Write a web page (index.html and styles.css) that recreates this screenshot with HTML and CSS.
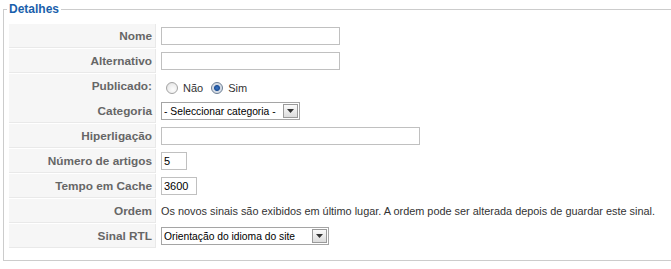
FILE: index.html
```html
<!DOCTYPE html>
<html lang="pt">
<head>
<meta charset="utf-8">
<title>Detalhes</title>
<link rel="stylesheet" href="styles.css">
</head>
<body>
<fieldset class="panel">
  <legend class="panel-title">Detalhes</legend>
  <div class="form">
    <div class="key">Nome</div>
    <div class="val"><input class="text w-name" type="text"></div>

    <div class="key">Alternativo</div>
    <div class="val"><input class="text w-name" type="text"></div>

    <div class="key key-top tall">Publicado:</div>
    <div class="val tall radios">
      <label class="radio"><input type="radio" name="pub"> Não</label>
      <label class="radio"><input type="radio" name="pub" checked> Sim</label>
    </div>

    <div class="key">Categoria</div>
    <div class="val">
      <span class="dropdown w-cat">
        <select class="select"><option>- Seleccionar categoria -</option></select>
        <span class="drop-btn"><svg width="7" height="4" viewBox="0 0 7 4"><path d="M0 0h7L3.5 4z" fill="#333"/></svg></span>
      </span>
    </div>

    <div class="key">Hiperligação</div>
    <div class="val"><input class="text w-link" type="text"></div>

    <div class="key">Número de artigos</div>
    <div class="val"><input class="text w-num" type="text" value="5"></div>

    <div class="key">Tempo em Cache</div>
    <div class="val"><input class="text w-cache" type="text" value="3600"></div>

    <div class="key">Ordem</div>
    <div class="val note">Os novos sinais são exibidos em último lugar. A ordem pode ser alterada depois de guardar este sinal.</div>

    <div class="key">Sinal RTL</div>
    <div class="val">
      <span class="dropdown w-rtl">
        <select class="select"><option>Orientação do idioma do site</option></select>
        <span class="drop-btn"><svg width="7" height="4" viewBox="0 0 7 4"><path d="M0 0h7L3.5 4z" fill="#333"/></svg></span>
      </span>
    </div>
  </div>
</fieldset>
</body>
</html>
```

FILE: styles.css
```css
html, body {
  margin: 0;
  padding: 0;
  background: #fff;
  overflow: hidden;
}
body {
  font-family: "Liberation Sans", Arial, sans-serif;
  font-size: 11px;
  color: #333;
}
.panel {
  margin: 2px 0 0 3px;
  width: 720px;
  border: 1px solid #ccc;
  padding: 8px 0 12px 5px;
  box-sizing: border-box;
}
.panel-title {
  color: #1a5fac;
  font-size: 12px;
  font-weight: bold;
  padding: 0 2px;
  margin-left: -2px;
  line-height: 14px;
}
.form {
  display: grid;
  grid-template-columns: 147px 1fr;
  grid-auto-rows: 24px;
  row-gap: 1px;
  column-gap: 1px;
}
.key {
  background: #f6f6f6;
  color: #666;
  font-size: 11.8px;
  font-weight: bold;
  text-align: right;
  border-right: 1px solid #e9e9e9;
  border-bottom: 1px solid #e9e9e9;
  box-sizing: border-box;
  padding: 0 3px;
  display: flex;
  align-items: center;
  justify-content: flex-end;
}
.key-top { align-items: flex-start; padding-top: 5px; }
.form > .tall { height: 28px; }
.val {
  display: flex;
  align-items: center;
  padding-left: 4px;
}
.text {
  font-family: "Liberation Sans", Arial, sans-serif;
  font-size: 11px;
  color: #000;
  height: 18px;
  border: 1px solid #c0c0c0;
  padding: 1px 2px;
  box-sizing: border-box;
  margin: 0;
  outline: none;
}
.w-name { width: 179px; }
.w-link { width: 259px; }
.w-num { width: 26px; }
.w-cache { width: 36px; }
.val.radios { align-items: flex-start; padding-top: 8px; }
.radio {
  display: inline-flex;
  align-items: center;
  color: #333;
  margin-right: 3px;
  line-height: 12px;
}
.radio input {
  appearance: none;
  -webkit-appearance: none;
  width: 12px;
  height: 12px;
  margin: 0 5px 0 5px;
  border-radius: 50%;
  border: 1px solid #a4a4a4;
  background: radial-gradient(circle at 60% 65%, #fdfdfd 0, #ececec 60%, #d4d4d4 100%);
  box-sizing: border-box;
}
.radio input:checked {
  border-color: #6b7d93;
  background: radial-gradient(circle at 50% 50%, #3b78c9 0, #1c4f96 2.5px, #cfd7e2 3.5px, #eef1f5 100%);
}
.dropdown {
  position: relative;
  display: inline-block;
  height: 18px;
}
.select {
  appearance: none;
  -webkit-appearance: none;
  width: 100%;
  height: 18px;
  border: 1px solid #a5a5a5;
  border-radius: 0;
  background: #fff;
  font-family: "Liberation Sans", Arial, sans-serif;
  font-size: 10.3px;
  color: #000;
  padding: 0 0 0 2px;
  margin: 0;
  box-sizing: border-box;
  outline: none;
}
.w-cat { width: 139px; }
.w-rtl { width: 168px; }
.drop-btn {
  position: absolute;
  right: 2px;
  top: 2px;
  width: 15px;
  height: 14px;
  box-sizing: border-box;
  border: 1px solid #9a9a9a;
  background: linear-gradient(#fafafa, #dcdcdc);
  display: flex;
  align-items: center;
  justify-content: center;
  pointer-events: none;
}
.note { color: #333; font-size: 10.9px; }
```
